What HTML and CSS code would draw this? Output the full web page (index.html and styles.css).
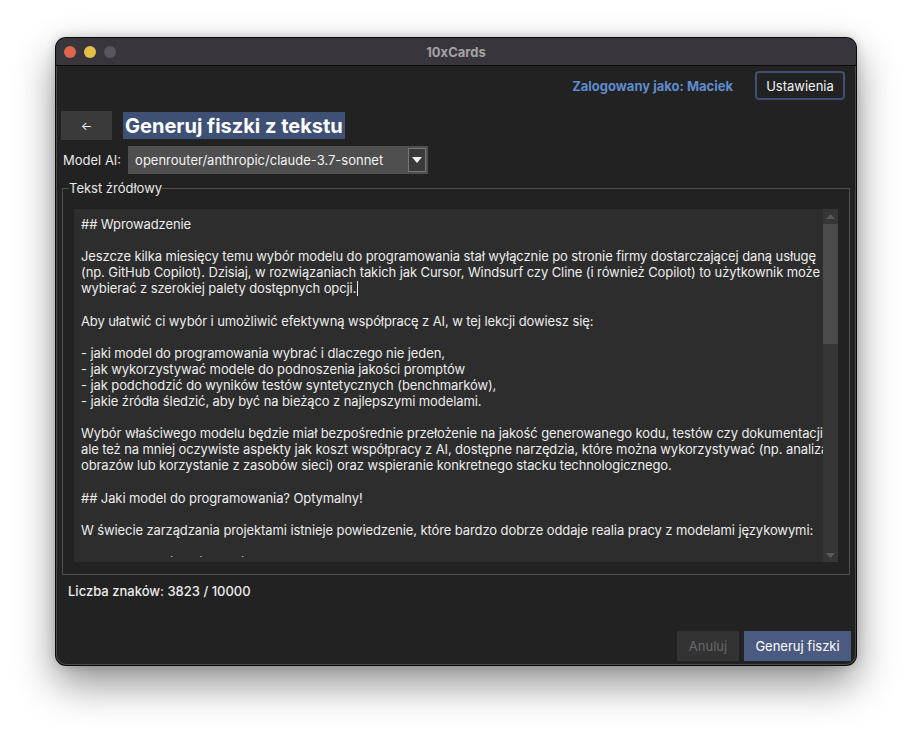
FILE: index.html
```html
<!DOCTYPE html>
<html lang="pl">
<head>
<meta charset="utf-8">
<title>10xCards</title>
<link rel="stylesheet" href="styles.css">
</head>
<body>
<div class="window">
  <div class="titlebar">
    <div class="lights">
      <span class="light red"></span>
      <span class="light yellow"></span>
      <span class="light gray"></span>
    </div>
    <div class="wtitle">10xCards</div>
    <div></div>
  </div>
  <div class="content">
    <div class="topbar">
      <span class="user">Zalogowany jako: Maciek</span>
      <button class="btn-settings">Ustawienia</button>
    </div>
    <div class="header">
      <button class="back">←</button>
      <h1 class="title">Generuj fiszki z tekstu</h1>
    </div>
    <div class="model-row">
      <span class="model-label">Model AI:</span>
      <div class="combo">
        <span class="combo-text">openrouter/anthropic/claude-3.7-sonnet</span>
        <span class="combo-arrow"><svg width="10" height="7" viewBox="0 0 10 7"><path d="M0 0 H10 L5 6 Z" fill="#f2f2f2"/></svg></span>
      </div>
    </div>
    <fieldset class="group">
      <legend>Tekst źródłowy</legend>
      <div class="editor">
        <div class="text"><div class="line">## Wprowadzenie</div><div class="line"></div><div class="line">Jeszcze kilka miesięcy temu wybór modelu do programowania stał wyłącznie po stronie firmy dostarczającej daną usługę</div><div class="line">(np. GitHub Copilot). Dzisiaj, w rozwiązaniach takich jak Cursor, Windsurf czy Cline (i również Copilot) to użytkownik może</div><div class="line">wybierać z szerokiej palety dostępnych opcji.<span class="caret"></span></div><div class="line"></div><div class="line">Aby ułatwić ci wybór i umożliwić efektywną współpracę z AI, w tej lekcji dowiesz się:</div><div class="line"></div><div class="line">- jaki model do programowania wybrać i dlaczego nie jeden,</div><div class="line">- jak wykorzystywać modele do podnoszenia jakości promptów</div><div class="line">- jak podchodzić do wyników testów syntetycznych (benchmarków),</div><div class="line">- jakie źródła śledzić, aby być na bieżąco z najlepszymi modelami.</div><div class="line"></div><div class="line">Wybór właściwego modelu będzie miał bezpośrednie przełożenie na jakość generowanego kodu, testów czy dokumentacji,</div><div class="line">ale też na mniej oczywiste aspekty jak koszt współpracy z AI, dostępne narzędzia, które można wykorzystywać (np. analiza</div><div class="line">obrazów lub korzystanie z zasobów sieci) oraz wspieranie konkretnego stacku technologicznego.</div><div class="line"></div><div class="line">## Jaki model do programowania? Optymalny!</div><div class="line"></div><div class="line">W świecie zarządzania projektami istnieje powiedzenie, które bardzo dobrze oddaje realia pracy z modelami językowymi:</div><div class="line"></div><div class="line">- Dobry, szybki, tani - wybierz dwa.</div></div>
        <div class="scrollbar">
          <div class="sb-arrow"><svg width="9" height="5" viewBox="0 0 9 5"><path d="M0 5 L4.5 0 L9 5 Z" fill="#5a5a5a"/></svg></div>
          <div class="sb-track"><div class="sb-thumb"></div></div>
          <div class="sb-arrow"><svg width="9" height="5" viewBox="0 0 9 5"><path d="M0 0 L4.5 5 L9 0 Z" fill="#5a5a5a"/></svg></div>
        </div>
      </div>
    </fieldset>
    <div class="count">Liczba znaków: 3823 / 10000</div>
    <div class="spacer"></div>
    <div class="actions">
      <button class="btn-cancel">Anuluj</button>
      <button class="btn-primary">Generuj fiszki</button>
    </div>
  </div>
</div>
</body>
</html>
```
FILE: styles.css
```css
* { box-sizing: border-box; }
html, body { margin: 0; padding: 0; }
body {
  background: #ffffff;
  width: 912px;
  height: 740px;
  overflow: hidden;
  font-family: "Inter", "Liberation Sans", sans-serif;
  font-size: 13px;
  color: #e8e8e8;
}
button { font-family: inherit; font-size: 13px; cursor: default; }

.window {
  margin: 38px 0 0 56px;
  width: 800px;
  height: 627px;
  border-radius: 10px;
  background: #222222;
  overflow: hidden;
  display: flex;
  flex-direction: column;
  box-shadow: 0 0 0 1px #0a0a0a, inset 0 0 0 1px #4a4a4a, 0 18px 40px rgba(0,0,0,0.45), 0 0 12px rgba(0,0,0,0.2);
}

.titlebar {
  height: 28px;
  flex: none;
  background: #38363b;
  border-bottom: 1px solid #0c0c0c;
  display: grid;
  grid-template-columns: 1fr auto 1fr;
  align-items: center;
}
.lights { display: flex; gap: 8px; padding-left: 8px; }
.light { width: 12px; height: 12px; border-radius: 50%; display: block; }
.red { background: #e0654f; }
.yellow { background: #e6bf45; }
.gray { background: #58575c; }
.wtitle { color: #a3a2a7; font-weight: 700; font-size: 13px; }

.content {
  flex: 1;
  display: flex;
  flex-direction: column;
  padding: 0 5px 4px 5px;
}

.topbar {
  margin-top: 5px;
  display: flex;
  justify-content: flex-end;
  align-items: center;
  gap: 22px;
  padding-right: 6px;
}
.user { color: #5e8ccf; font-weight: 700; font-size: 13px; }
.btn-settings {
  width: 90px;
  height: 29px;
  background: #222222;
  border: 2px solid #3f5170;
  border-radius: 4px;
  color: #f2f2f2;
  padding: 0;
}

.header {
  margin-top: 11px;
  display: flex;
  align-items: center;
  gap: 11px;
}
.back {
  width: 51px;
  height: 29px;
  background: #3a3a3a;
  border: none;
  border-radius: 0;
  color: #f0f0f0;
  font-size: 12px;
  padding: 0;
}
.title {
  margin: 0;
  font-size: 20px;
  font-weight: 700;
  color: #ffffff;
  background: #3f5075;
  height: 27px;
  line-height: 28px;
  padding: 0 2px;
}

.model-row {
  margin-top: 6px;
  display: flex;
  align-items: center;
  gap: 7px;
  padding-left: 2px;
}
.model-label { color: #e8e8e8; }
.combo {
  width: 300px;
  height: 28px;
  background: #4f4f4f;
  display: flex;
  align-items: center;
  justify-content: space-between;
  padding: 0 2px 0 7px;
}
.combo-text { color: #f2f2f2; }
.combo-arrow {
  width: 18px;
  height: 24px;
  background: #3a3a3a;
  border: 1px solid #777;
  display: flex;
  align-items: center;
  justify-content: center;
}

.group {
  margin: 6px 1px 0 1px;
  border: 1px solid #505050;
  padding: 13px 11px 12px 11px;
  min-width: 0;
}
.group legend {
  margin-left: -5px;
  padding: 0;
  color: #e8e8e8;
  line-height: 16px;
}

.editor {
  height: 353px;
  background: #2d2d2d;
  display: flex;
  overflow: hidden;
}
.text {
  flex: 1;
  min-width: 0;
  overflow: hidden;
  padding: 7px 0 0 7px;
  margin-bottom: 5px;
  color: #ececec;
  line-height: 16.1px;
  letter-spacing: -0.1px;
}
.line { white-space: pre; height: 16.1px; }
.caret {
  display: inline-block;
  width: 1px;
  height: 15px;
  background: #f0f0f0;
  vertical-align: -3px;
  margin-left: 1px;
}

.scrollbar {
  width: 15px;
  flex: none;
  background: #363636;
  display: flex;
  flex-direction: column;
}
.sb-arrow {
  height: 14px;
  display: flex;
  align-items: center;
  justify-content: center;
  flex: none;
}
.sb-track { flex: 1; padding-top: 1px; }
.sb-thumb { height: 120px; background: #4b4b4b; }

.count {
  margin: 8px 0 0 7px;
  color: #ececec;
  font-weight: 500;
  line-height: 16px;
}
.spacer { flex: 1; }
.actions {
  display: flex;
  justify-content: flex-end;
  gap: 5px;
}
.btn-cancel {
  width: 62px;
  height: 30px;
  background: #333333;
  border: none;
  color: #686868;
  padding: 0;
}
.btn-primary {
  width: 107px;
  height: 30px;
  background: #4a5a80;
  border: none;
  color: #ffffff;
  padding: 0;
}
```
